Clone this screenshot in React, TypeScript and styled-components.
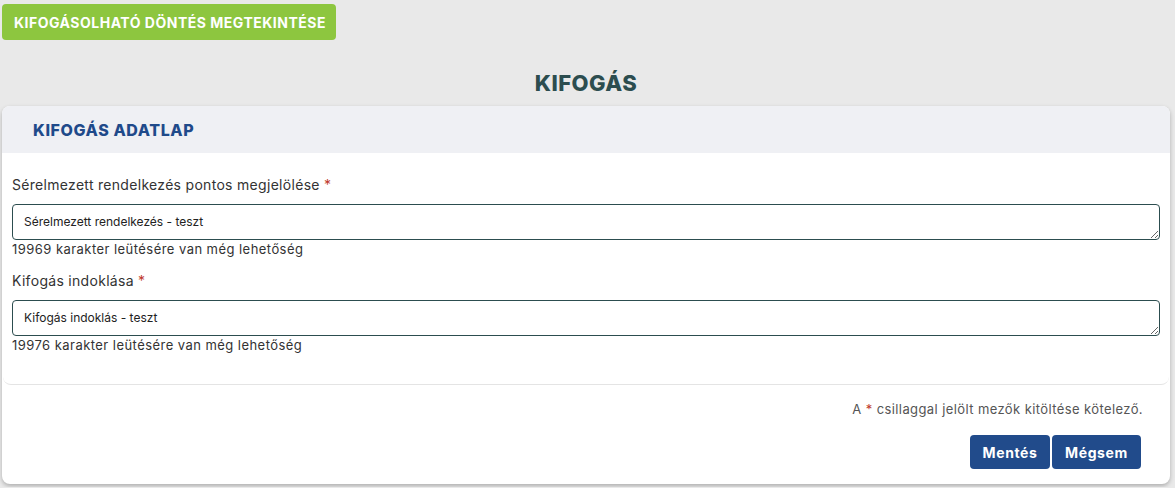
import React from "react";
import styled, { createGlobalStyle } from "styled-components";

const Global = createGlobalStyle`
  html, body { margin: 0; padding: 0; background: #e9e9e9; }
  body { font-family: Inter, "Open Sans", sans-serif; color: #333; }
  * { box-sizing: border-box; }
`;

const Page = styled.div`
  padding: 4px 5px 3px 2px;
  display: flex;
  flex-direction: column;
`;

const TopBar = styled.div`
  display: flex;
`;

const GreenButton = styled.button`
  height: 36px;
  padding: 0 10px 0 12px;
  background: #8dc63f;
  border: none;
  border-radius: 4px;
  color: #fff;
  font-family: Inter, sans-serif;
  font-weight: 700;
  font-size: 14px;
  letter-spacing: 0.5px;
  text-transform: uppercase;
  cursor: pointer;
`;

const Title = styled.h1`
  margin: 30px 0 0;
  height: 36px;
  text-align: center;
  font-size: 22px;
  font-weight: 800;
  letter-spacing: 0.5px;
  color: #2c4d4f;
  line-height: 26px;
`;

const Card = styled.div`
  background: #fff;
  border-radius: 8px;
  box-shadow: 0 2px 4px rgba(0, 0, 0, 0.25);
  display: flex;
  flex-direction: column;
  overflow: hidden;
`;

const CardHeader = styled.div`
  height: 47px;
  background: #eff0f4;
  display: flex;
  align-items: center;
  padding-left: 31px;
`;

const CardTitle = styled.h2`
  margin: 0;
  font-size: 16px;
  font-weight: 800;
  letter-spacing: 0.6px;
  color: #1f4a8a;
`;

const Body = styled.div`
  margin: 0 1px;
  padding: 22px 9px 30px 9px;
  border-bottom: 1px solid #e4e4e4;
  border-radius: 0 0 8px 8px;
  display: flex;
  flex-direction: column;
`;

const Field = styled.div`
  display: flex;
  flex-direction: column;
  & + & {
    margin-top: 13px;
  }
`;

const Label = styled.label`
  font-size: 14px;
  letter-spacing: 0.3px;
  line-height: 20px;
  color: #333;
  margin-bottom: 9px;
`;

const Req = styled.span`
  color: #c0392b;
`;

const Area = styled.textarea`
  display: block;
  width: 100%;
  height: 36px;
  min-height: 36px;
  border: 1px solid #2c4d4f;
  border-radius: 4px;
  padding: 8px 11px;
  font-family: Inter, sans-serif;
  font-size: 12px;
  line-height: 18px;
  color: #222;
  background: #fff;
  resize: vertical;
  outline: none;
`;

const Counter = styled.div`
  font-size: 13px;
  letter-spacing: 0.45px;
  line-height: 18px;
  color: #333;
`;

const Footer = styled.div`
  padding: 15px 29px 15px 0;
  display: flex;
  flex-direction: column;
  align-items: flex-end;
`;

const Note = styled.div`
  margin-right: -2px;
  font-size: 13px;
  letter-spacing: 0.4px;
  line-height: 18px;
  color: #555;
`;

const Buttons = styled.div`
  display: flex;
  gap: 2px;
  margin-top: 17px;
`;

const BlueButton = styled.button<{ $w: number }>`
  width: ${(p) => p.$w}px;
  height: 34px;
  background: #214b8b;
  border: none;
  border-radius: 4px;
  color: #fff;
  font-family: Inter, sans-serif;
  font-weight: 700;
  font-size: 14px;
  letter-spacing: 0.6px;
  cursor: pointer;
`;

export default function App() {
  return (
    <>
      <Global />
      <Page>
        <TopBar>
          <GreenButton>Kifogásolható döntés megtekintése</GreenButton>
        </TopBar>
        <Title>KIFOGÁS</Title>
        <Card>
          <CardHeader>
            <CardTitle>KIFOGÁS ADATLAP</CardTitle>
          </CardHeader>
          <Body>
            <Field>
              <Label>
                Sérelmezett rendelkezés pontos megjelölése <Req>*</Req>
              </Label>
              <Area defaultValue="Sérelmezett rendelkezés - teszt" />
              <Counter>19969 karakter leütésére van még lehetőség</Counter>
            </Field>
            <Field>
              <Label>
                Kifogás indoklása <Req>*</Req>
              </Label>
              <Area defaultValue="Kifogás indoklás - teszt" />
              <Counter>19976 karakter leütésére van még lehetőség</Counter>
            </Field>
          </Body>
          <Footer>
            <Note>
              A <Req>*</Req> csillaggal jelölt mezők kitöltése kötelező.
            </Note>
            <Buttons>
              <BlueButton $w={80}>Mentés</BlueButton>
              <BlueButton $w={89}>Mégsem</BlueButton>
            </Buttons>
          </Footer>
        </Card>
      </Page>
    </>
  );
}
